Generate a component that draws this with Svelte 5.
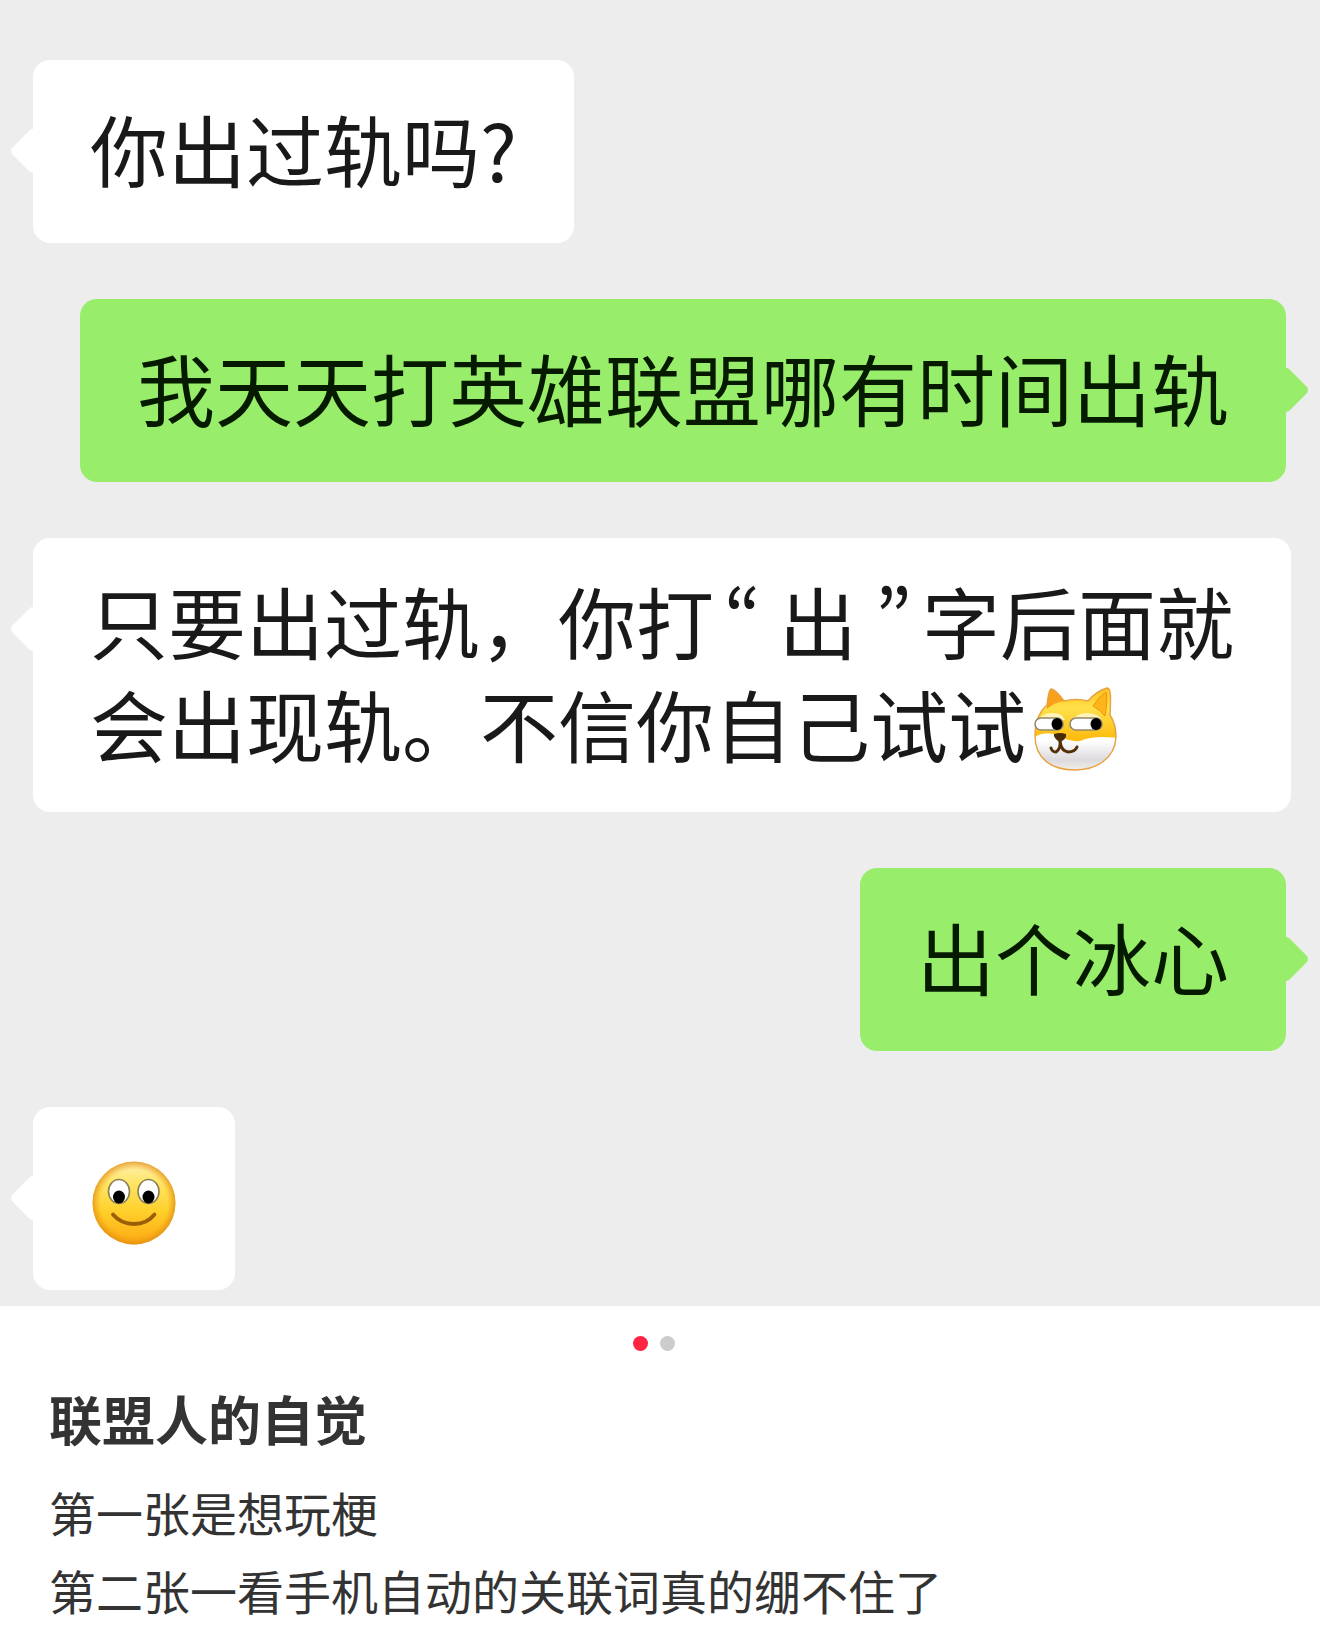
<script lang="ts">
  type Part = { kind: "text" | "open" | "close" | "doge" | "smile", value?: string };
  type Message = { mine: boolean, lines: Part[][] };

  const text = (value: string): Part => ({ kind: "text", value });

  const messages: Message[] = [
    { mine: false, lines: [[text("你出过轨吗?")]] },
    { mine: true, lines: [[text("我天天打英雄联盟哪有时间出轨")]] },
    {
      mine: false,
      lines: [
        [text("只要出过轨，你打"), { kind: "open" }, text("出"), { kind: "close" }, text("字后面就")],
        [text("会出现轨。不信你自己试试"), { kind: "doge" }],
      ],
    },
    { mine: true, lines: [[text("出个冰心")]] },
    { mine: false, lines: [[{ kind: "smile" }]] },
  ];

  const slides = [1, 2];
  let current = $state(1);
</script>

{#snippet doge()}
  <svg class="emoji" viewBox="0 0 84 84" role="img" aria-label="doge">
    <defs>
      <linearGradient id="fur" x1="0" y1="0" x2="0" y2="1">
        <stop offset="0" stop-color="#ffc21c" />
        <stop offset="0.25" stop-color="#ffe04a" />
        <stop offset="0.6" stop-color="#fdbd12" />
      </linearGradient>
      <linearGradient id="muzzle" x1="0" y1="0" x2="0" y2="1">
        <stop offset="0.2" stop-color="#ffffff" />
        <stop offset="0.7" stop-color="#dcdade" />
        <stop offset="1" stop-color="#f3eee9" />
      </linearGradient>
      <clipPath id="head">
        <path d="M13 18C14 9 15 3 17 2C20 2 26 8 30 14Q42 11 54 14C59 8 66 3 73 1C77 1 77 9 76 28Q82 37 82 50C81 72 62 83 41 83C18 83 1 72 1 49C1 37 4 26 13 18Z" />
      </clipPath>
    </defs>
    <g clip-path="url(#head)">
      <rect width="84" height="84" fill="url(#fur)" />
      <path d="M13 18C14 9 15 3 17 2C20 2 26 8 30 14Q21 15 13 22Z" fill="#f7a01c" />
      <path d="M59 19Q65 9 72 5Q74 13 71 29Q66 23 59 19Z" fill="#ffb51a" stroke="#ec9514" stroke-width="1" />
      <path d="M4 34Q8 25 20 26Q28 26 31 33Z" fill="#fff3b5" />
      <path d="M38 33Q44 25 54 26Q65 27 68 33Z" fill="#fff3b5" />
      <path d="M0 50Q13 43 26 49Q35 55 46 54Q60 48 84 51V84H0Z" fill="url(#muzzle)" />
    </g>
    <path d="M13 18C14 9 15 3 17 2C20 2 26 8 30 14Q42 11 54 14C59 8 66 3 73 1C77 1 77 9 76 28Q82 37 82 50C81 72 62 83 41 83C18 83 1 72 1 49C1 37 4 26 13 18Z" fill="none" stroke="#e8a040" stroke-width="1.4" />
    <rect x="1" y="31" width="28" height="12" rx="6" fill="#fff" stroke="#93886c" stroke-width="1.6" />
    <rect x="36" y="31" width="32" height="12" rx="6" fill="#fff" stroke="#93886c" stroke-width="1.6" />
    <ellipse cx="23" cy="37" rx="5.5" ry="6" />
    <ellipse cx="62" cy="37" rx="5.5" ry="6" />
    <path d="M20 47Q26 45 32 47Q33 51 28 54Q26 56 24 54Q19 50 20 47Z" fill="#4a2c08" />
    <path d="M26 53Q27 62 22 65Q18 65 17 61M26 54Q27 64 34 65Q41 65 43 60" fill="none" stroke="#533009" stroke-width="3" stroke-linecap="round" />
  </svg>
{/snippet}

{#snippet smile()}
  <svg class="emoji" viewBox="0 0 84 84" role="img" aria-label="smile">
    <defs>
      <linearGradient id="skin" x1="0" y1="0" x2="0" y2="1">
        <stop offset="0" stop-color="#fff0b4" />
        <stop offset="0.25" stop-color="#ffe667" />
        <stop offset="0.6" stop-color="#ffd02b" />
        <stop offset="1" stop-color="#fda812" />
      </linearGradient>
      <radialGradient id="rim">
        <stop offset="0.8" stop-color="#f29a10" stop-opacity="0" />
        <stop offset="1" stop-color="#dd8b14" stop-opacity="0.75" />
      </radialGradient>
    </defs>
    <circle cx="42" cy="42" r="41.5" fill="url(#skin)" />
    <circle cx="42" cy="42" r="41.5" fill="url(#rim)" />
    <ellipse cx="27" cy="30.5" rx="10.5" ry="12" fill="#fff" stroke="#8b8055" stroke-width="1.6" />
    <ellipse cx="56.5" cy="30.5" rx="10.5" ry="12" fill="#fff" stroke="#8b8055" stroke-width="1.6" />
    <ellipse cx="27" cy="36" rx="6" ry="6.5" />
    <ellipse cx="56.5" cy="36" rx="6" ry="6.5" />
    <path d="M21 53.5Q29 63 42 63Q55 63 62.5 53.5" fill="none" stroke="#9a5f08" stroke-width="3.8" stroke-linecap="round" />
  </svg>
{/snippet}

<main>

  <section class="chat">
    {#each messages as message}
      <div class="row" class:mine={message.mine}>
        <div class="bubble">
          {#each message.lines as line}
            <div class="line">
              {#each line as part}
                {#if part.kind === "doge"}
                  {@render doge()}
                {:else if part.kind === "smile"}
                  {@render smile()}
                {:else if part.kind === "open"}
                  <span class="quote open">“</span>
                {:else if part.kind === "close"}
                  <span class="quote close">”</span>
                {:else}
                  <span>{part.value}</span>
                {/if}
              {/each}
            </div>
          {/each}
        </div>
      </div>
    {/each}
  </section>

  <nav class="dots">
    {#each slides as slide}
      <button
        type="button"
        class:active={slide === current}
        aria-label="第{slide}张"
        onclick={() => current = slide}
      ></button>
    {/each}
  </nav>

  <article>
    <h1>联盟人的自觉</h1>
    <p>第一张是想玩梗</p>
    <p>第二张一看手机自动的关联词真的绷不住了</p>
  </article>

</main>

<style>

  :global(body) {
    margin: 0;
    background-color: #fff;
  }

  main {
    font-family: "Noto Sans CJK SC", sans-serif;
    color: #333;
  }

  .chat {
    display: flex;
    flex-direction: column;
    gap: 56px;
    padding: 60px 28px 16px 33px;
    background-color: #ededed;
  }

  .row {
    display: flex;
  }

  .row.mine {
    justify-content: flex-end;
    padding-right: 6px;
  }

  .bubble {
    position: relative;
    display: flex;
    flex-direction: column;
    justify-content: center;
    box-sizing: border-box;
    min-height: 183px;
    padding: 31px 57px 37px;
    border-radius: 17px;
    background-color: #fff;
    color: #191919;
    font-size: 78px;
    line-height: 103px;
  }

  .mine .bubble {
    background-color: #98ed6b;
    color: #061a00;
  }

  /* tail: a square turned on its corner */
  .bubble::before {
    content: "";
    position: absolute;
    top: 74px;
    left: -17px;
    width: 34px;
    height: 34px;
    border-radius: 5px;
    background-color: inherit;
    transform: rotate(45deg);
  }

  .mine .bubble::before {
    left: auto;
    right: -17px;
  }

  .line {
    display: flex;
    flex-wrap: wrap;
    position: relative;
  }

  .quote {
    box-sizing: border-box;
    width: 65px;
    font-feature-settings: "pwid";
  }

  .open {
    padding-left: 10px;
  }

  .close {
    padding-right: 10px;
    text-align: right;
  }

  .emoji {
    display: block;
    flex: none;
    width: 84px;
    height: 84px;
    margin: 15px 2px 0;
  }

  span + .emoji {
    margin-left: 8px;
  }

  .dots {
    display: flex;
    justify-content: center;
    padding: 30px 0 28px;
  }

  .dots button {
    width: 15px;
    height: 15px;
    margin: 0 12px 0 0;
    padding: 0;
    border: none;
    border-radius: 50%;
    background-color: #ccc;
    cursor: pointer;
  }

  .dots button.active {
    background-color: #ff2442;
  }

  article {
    padding: 0 49px 8px;
  }

  h1 {
    margin: 0 0 16px;
    font-size: 53px;
    font-weight: 600;
    line-height: 78px;
  }

  p {
    margin: 0;
    font-size: 47px;
    line-height: 78px;
  }

</style>
